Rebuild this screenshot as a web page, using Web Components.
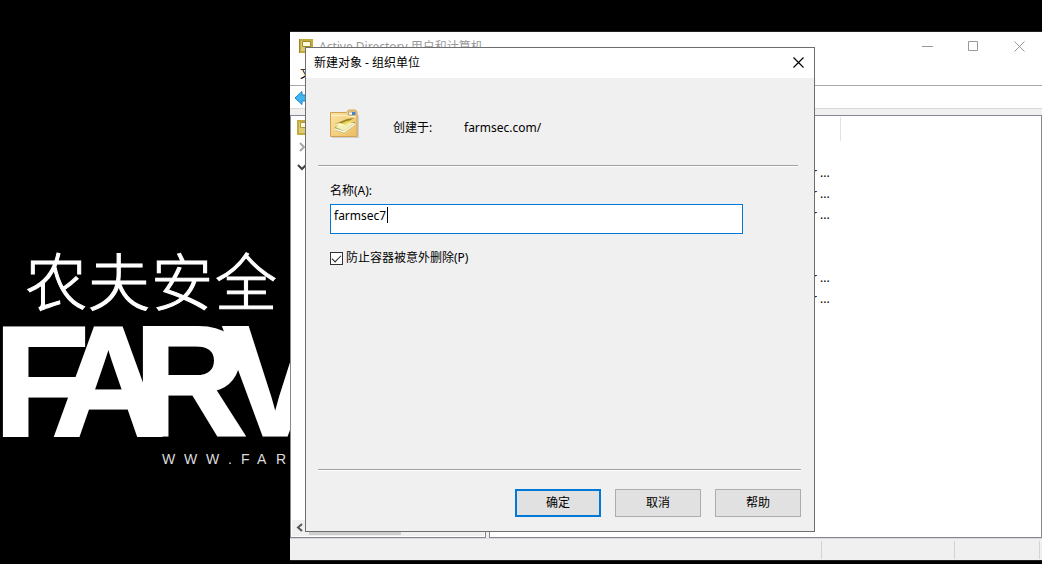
<!DOCTYPE html>
<html lang="zh-CN">
<head>
<meta charset="utf-8">
<title>Active Directory 用户和计算机</title>
<style>
  body { margin: 0; background: #000; color: #000; font: 12px/18px "Noto Sans", "Noto Sans CJK SC", sans-serif; }
</style>
</head>
<body>
<desk-top>
  <wall-paper slot="wallpaper"></wall-paper>
  <mmc-window>
    <tree-pane slot="tree"></tree-pane>
    <list-pane slot="list"></list-pane>
  </mmc-window>
  <new-object-dialog slot="dialog" heading="新建对象 - 组织单位">
    <dialog-intro path="farmsec.com/"></dialog-intro>
    <name-field value="farmsec7"></name-field>
    <check-row>防止容器被意外删除(P)</check-row>
    <push-button slot="actions" primary>确定</push-button>
    <push-button slot="actions">取消</push-button>
    <push-button slot="actions">帮助</push-button>
  </new-object-dialog>
</desk-top>
<script>
function define(name, html, setup) {
  const template = document.createElement('template');
  template.innerHTML = '<style>*{box-sizing:border-box}:host{display:block;box-sizing:border-box}</style>' + html;
  customElements.define(name, class extends HTMLElement {
    constructor() {
      super();
      this.attachShadow({ mode: 'open' }).append(template.content.cloneNode(true));
    }
    connectedCallback() { if (setup) setup(this, this.shadowRoot); }
  });
}

define('desk-top', `
  <style>
    :host { position: relative; display: grid; grid-template-columns: 290px 1fr; min-height: 100vh; overflow: hidden; background: #000; }
    .app { display: grid; padding: 31px 0 3px; }
    .float { position: absolute; left: 305px; top: 47px; }
  </style>
  <slot name="wallpaper"></slot>
  <div class="app"><slot></slot></div>
  <div class="float"><slot name="dialog"></slot></div>`);

define('wall-paper', `
  <style>
    :host { overflow: hidden; padding-top: 240px; }
    svg { display: block; fill: #fff; }
    .cn { font: 300 62px "Noto Sans CJK SC", sans-serif; stroke: #fff; stroke-width: 1px; }
    .brand { font: 700 156px "Liberation Sans", sans-serif; stroke: #fff; stroke-width: 3px; }
    .site { font: 400 14px "Liberation Sans", sans-serif; fill: #ddd; }
  </style>
  <svg width="290" height="240">
    <text class="cn" x="25 88 151 215" y="66">农夫安全</text>
    <text class="brand" x="-6 52 134 223" y="195">FARV</text>
    <text class="site" x="162 184 206 228 241 257 276" y="224">WWW.FAR</text>
  </svg>`);

define('mmc-window', `
  <style>
    :host { display: flex; flex-direction: column; background: #f0f0f0; border: solid #222; border-width: 1px 0; }
    header { display: flex; align-items: flex-start; height: 30px; background: #fff; padding: 6px 0 0 8px; color: #999; }
    header svg { flex: none; }
    h1 { flex: 1; margin: 0 0 0 5px; font: inherit; white-space: nowrap; }
    header button { width: 46px; height: 16px; padding: 0; border: 0; background: none; color: #999; display: grid; place-items: center; }
    nav { height: 24px; background: #fff; border-bottom: 1px solid #a8a8a8; padding: 3px 0 0 10px; }
    nav button { padding: 0; border: 0; background: none; font: inherit; }
    .tools { height: 23px; background: #fff; border-bottom: 1px solid #d9d9d9; padding: 5px 0 0 4px; }
    .tools button { display: block; padding: 0; border: 0; background: none; }
    .panes { flex: 1; display: grid; grid-template-columns: 196px 1fr; gap: 3px; padding-top: 6px; }
    footer { display: grid; grid-template-columns: 1fr 133px 85px; height: 22px; border-top: 1px solid #d9d9d9; padding: 2px 2px 1px 0; }
    footer span { border-right: 1px solid #d4d4d4; }
  </style>
  <header>
    <svg width="16" height="16" viewBox="0 0 16 16"><path d="M2 2h12v12H2z" fill="#dccb70" stroke="#c4ab40" stroke-width="2"/><path d="M4.500 3.500h8v5h-8z" fill="#fffbe0" stroke="#a08a28"/><path d="M1.500 1v14" stroke="#9a8324"/></svg>
    <h1>Active Directory 用户和计算机</h1>
    <button aria-label="最小化"><svg width="11" height="11"><path d="M0 5.500h11" stroke="currentColor"/></svg></button>
    <button aria-label="最大化"><svg width="11" height="11"><path d="M.5.5h9v9h-9z" fill="none" stroke="currentColor"/></svg></button>
    <button aria-label="关闭"><svg width="11" height="11"><path d="M.5.5l10 10M10.500.5l-10 10" stroke="currentColor"/></svg></button>
  </header>
  <nav><button>文</button></nav>
  <div class="tools"><button aria-label="后退"><svg width="16" height="14" viewBox="0 0 16 14"><path d="M1 7l7-6.500V4h7v6H8v3.500z" fill="#41b4f2" stroke="#1b83cb"/></svg></button></div>
  <div class="panes"><slot name="tree"></slot><slot name="list"></slot></div>
  <footer><span></span><span></span><span></span></footer>`);

define('tree-pane', `
  <style>
    :host { display: flex; flex-direction: column; border: 1px solid #828790; background: #fff; }
    .nodes { flex: 1; display: grid; align-content: start; gap: 2px; padding: 3px 5px; }
    .nodes svg { display: block; }
    .scroll { display: flex; height: 16px; margin: 0 1px 1px; background: #f0f0f0; align-items: center; padding-left: 4px; gap: 6px; }
    .thumb { width: 92px; height: 16px; border-bottom: 1px solid #f0f0f0; background: #cdcdcd; }
    .scroll svg { margin-bottom: 2px; }
  </style>
  <div class="nodes">
    <svg width="18" height="17" viewBox="0 0 18 17"><path d="M2 2h13v13H2z" fill="#dccb70" stroke="#c4ab40" stroke-width="2"/><path d="M4.500 3.500h9v5h-9z" fill="#fffbe0" stroke="#b09a38"/></svg>
    <svg width="18" height="18"><path d="M4 5l4 4-4 4" fill="none" stroke="#a6a6a6" stroke-width="2"/></svg>
    <svg width="18" height="18"><path d="M2 7l4 4 4-4" fill="none" stroke="#404040" stroke-width="2"/></svg>
  </div>
  <div class="scroll">
    <svg width="7" height="9"><path d="M6 1L2 4.500 6 8" fill="none" stroke="#555" stroke-width="2"/></svg>
    <div class="thumb"></div>
  </div>`);

define('list-pane', `
  <style>
    :host { border: 1px solid #828790; background: #fff; min-width: 0; }
    table { border-collapse: collapse; table-layout: fixed; width: 100%; line-height: 18px; margin-top: 1px; }
    th { height: 24px; padding: 0; border-right: 1px solid #e3e3e3; }
    th:last-child { border: 0; }
    td { height: 21px; padding: 0 0 0 322px; white-space: nowrap; }
    .first { width: 350px; }
  </style>
  <table><thead><tr><th class="first"></th><th></th></tr></thead><tbody></tbody></table>`,
  (host, root) => {
    root.querySelector('tbody').innerHTML =
      ['', 'r ...', 'r ...', 'r ...', '', '', 'r ...', 'r ...'].map(t => `<tr><td>${t}</td></tr>`).join('');
  });

define('new-object-dialog', `
  <style>
    :host { width: 510px; background: #f0f0f0; border: 1px solid #6e6e70; }
    header { display: flex; align-items: center; justify-content: space-between; height: 30px; background: #fff; padding: 0 10px 0 8px; }
    h2 { margin: 0; font: inherit; }
    header button { padding: 0 0 2px; border: 0; background: none; display: grid; }
    .body { min-height: 391px; padding: 0 16px 0 12px; }
    footer { display: flex; justify-content: flex-end; gap: 14px; margin: 0 13px 0 12px; padding: 19px 0 14px; border-top: 1px solid #a0a0a0; box-shadow: inset 0 1px #fff; }
  </style>
  <header><h2></h2><button aria-label="关闭"><svg width="11" height="11"><path d="M.5.5l10 10M10.500.5l-10 10" stroke="#000" stroke-width="1.200"/></svg></button></header>
  <div class="body"><slot></slot></div>
  <footer><slot name="actions"></slot></footer>`,
  (host, root) => { root.querySelector('h2').textContent = host.getAttribute('heading'); });

define('dialog-intro', `
  <style>
    :host { display: flex; align-items: center; height: 89px; padding: 12px 0 0 10px; border-bottom: 1px solid #fff; box-shadow: inset 0 -1px #a0a0a0; }
    svg { flex: none; margin: 0 32px 8px 0; }
    .label { width: 71px; }
  </style>
  <svg width="33" height="30" viewBox="0 0 33 30">
    <defs><linearGradient id="f" x2="1" y2="1"><stop stop-color="#ffe6a6"/><stop offset="1" stop-color="#e9bd62"/></linearGradient></defs>
    <path d="M4 28h26V6" fill="none" stroke="#cfcfcf" stroke-width="2"/>
    <path d="M2.500 3.500h16l2-2.500h7l1.500 2v24.500H2.500z" fill="url(#f)" stroke="#cfa254"/>
    <path d="M20.500 3h7v3h-7z" fill="#fff" stroke="#b7a070"/><path d="M24 3h3v3h-3z" fill="#3f83d6"/>
    <path d="M3 6.500h15l2 1h8" stroke="#fff0c4" fill="none"/>
    <path d="M7 18l3-2 17-3v3l-11 8-9-3z" fill="#8f9348"/>
    <path d="M7 18l11-5 9 1-11 8z" fill="#f4efb4"/>
    <path d="M7 20l9 3 11-8" stroke="#fffef0" fill="none" stroke-width="1.500"/>
    <path d="M7 15l12-5 7-1-9 6-4 1z" fill="#9a8624"/>
    <path d="M7 15l5-1 5 1-5 3z" fill="#fff6c0"/>
    <path d="M14 14l5-2 6-1-8 5z" fill="#efd65c"/>
  </svg>
  <span class="label">创建于:</span><span class="path"></span>`,
  (host, root) => { root.querySelector('.path').textContent = host.getAttribute('path'); });

define('name-field', `
  <style>
    :host { padding: 15px 55px 0 12px; }
    label { display: block; margin-bottom: 4px; line-height: 18px; }
    .box { position: relative; height: 30px; }
    input { display: block; width: 100%; height: 30px; margin: 0; padding: 0 3px 8px; border: 1px solid #0078d7; background: #fff; font: inherit; color: inherit; outline: 0; }
    .caret { position: absolute; left: 57px; top: 3px; width: 1px; height: 16px; background: #000; }
  </style>
  <label for="name">名称(A):</label>
  <div class="box"><input id="name" type="text"><span class="caret"></span></div>`,
  (host, root) => { root.querySelector('input').value = host.getAttribute('value'); });

define('check-row', `
  <style>
    :host { padding: 15px 12px 0; }
    label { display: flex; align-items: center; gap: 3px; line-height: 18px; }
    input { appearance: none; width: 13px; height: 13px; margin: 0; border: 1px solid #333; background: #fff; display: grid; }
    input:checked::before { content: ""; width: 8px; height: 4px; margin: 2px 0 0 1px; border: solid #222; border-width: 0 0 1px 1px; transform: rotate(-45deg); }
  </style>
  <label><input type="checkbox" checked><span><slot></slot></span></label>`);

define('push-button', `
  <style>
    button { display: block; width: 86px; height: 28px; padding: 0; border: 1px solid #adadad; background: #e1e1e1; font: inherit; color: inherit; }
    :host([primary]) button { border: 2px solid #0078d7; }
  </style>
  <button type="button"><slot></slot></button>`);
</script>
</body>
</html>
